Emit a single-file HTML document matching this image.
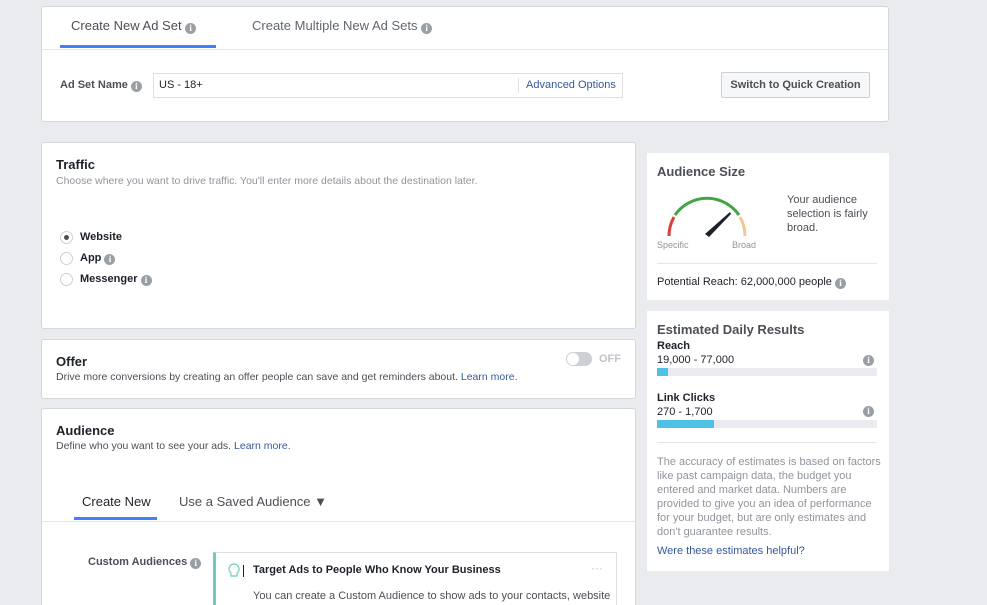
<!DOCTYPE html>
<html><head><meta charset="utf-8"><style>
*{box-sizing:border-box;margin:0;padding:0}
html{width:987px;height:605px;overflow:hidden}
body{width:987px;height:605px;background:#e9ebee;font-family:"Liberation Sans",Arial,sans-serif;color:#1d2129;position:relative;overflow:hidden;font-size:12px}
.a{position:absolute;white-space:nowrap}
.w{white-space:normal}
.card{position:absolute;background:#fff;border:1px solid #d3d6db;border-radius:3px;overflow:hidden}
.i{display:inline-block;width:11px;height:11px;border-radius:50%;background:#9a9fa6;color:#fff;font-size:9px;line-height:11px;text-align:center;font-weight:bold;vertical-align:-1px;font-family:"Liberation Serif",serif}
.radio{position:absolute;width:13px;height:13px;border:1px solid #ccd0d5;border-radius:50%}
.g{color:#90949c}
.lnk{color:#365899}
.bar{position:absolute;height:8px;background:#e9ebee;left:10px;width:220px}
.bar div{height:8px;background:#4ec1e6}
</style></head><body>

<div class="card" style="left:41px;top:6px;width:848px;height:116px">
 <div class="a" style="left:29px;top:11px;font-size:13px;color:#4b4f56">Create New Ad Set <span class="i">i</span></div>
 <div class="a" style="left:18px;top:38px;width:156px;height:3px;background:#4080ff"></div>
 <div class="a" style="left:210px;top:11px;font-size:13px;color:#606770">Create Multiple New Ad Sets <span class="i">i</span></div>
 <div class="a" style="left:0;top:42px;width:846px;height:1px;background:#e5e5e5"></div>
 <div class="a" style="left:18px;top:72px;font-size:11px;font-weight:bold;color:#4b4f56">Ad Set Name <span class="i">i</span></div>
 <div class="a" style="left:111px;top:66px;width:470px;height:25px;border:1px solid #dddfe2;font-size:11px"><span class="a" style="left:5px;top:5px">US - 18+</span><span class="a" style="left:364px;top:4px;height:15px;border-left:1px solid #dddfe2"></span><span class="a lnk" style="left:372px;top:5px">Advanced Options</span></div>
 <div class="a" style="left:679px;top:65px;width:149px;height:26px;border:1px solid #ccd0d5;background:#f6f7f9;border-radius:2px;font-weight:bold;color:#4b4f56;font-size:11px;text-align:center;line-height:24px">Switch to Quick Creation</div>
</div>

<div class="card" style="left:41px;top:142px;width:595px;height:187px">
 <div class="a" style="left:14px;top:14px;font-size:13px;font-weight:bold;color:#1d2129">Traffic</div>
 <div class="a g" style="left:14px;top:32px;font-size:10.5px">Choose where you want to drive traffic. You'll enter more details about the destination later.</div>
 <div class="radio" style="left:18px;top:88px"><div class="a" style="left:3px;top:3px;width:5px;height:5px;border-radius:50%;background:#4b4f56"></div></div>
 <div class="a" style="left:38px;top:88px;font-size:11px;font-weight:bold">Website</div>
 <div class="radio" style="left:18px;top:109px"></div>
 <div class="a" style="left:38px;top:109px;font-size:11px;font-weight:bold">App <span class="i">i</span></div>
 <div class="radio" style="left:18px;top:130px"></div>
 <div class="a" style="left:38px;top:130px;font-size:11px;font-weight:bold">Messenger <span class="i">i</span></div>
</div>

<div class="card" style="left:41px;top:339px;width:595px;height:60px">
 <div class="a" style="left:14px;top:14px;font-size:13px;font-weight:bold">Offer</div>
 <div class="a" style="left:14px;top:31px;font-size:10.5px;color:#4b4f56">Drive more conversions by creating an offer people can save and get reminders about. <span class="lnk">Learn more.</span></div>
 <div class="a" style="left:524px;top:12px;width:26px;height:14px;border-radius:7px;background:#ccd0d5"><div class="a" style="left:1px;top:1px;width:12px;height:12px;border-radius:50%;background:#fff"></div></div>
 <div class="a" style="left:557px;top:13px;font-size:11px;font-weight:bold;color:#bec3c9">OFF</div>
</div>

<div class="card" style="left:41px;top:408px;width:595px;height:210px">
 <div class="a" style="left:14px;top:14px;font-size:13px;font-weight:bold">Audience</div>
 <div class="a" style="left:14px;top:31px;font-size:10.5px;color:#4b4f56">Define who you want to see your ads. <span class="lnk">Learn more.</span></div>
 <div class="a" style="left:40px;top:85px;font-size:13px;color:#1d2129">Create New</div>
 <div class="a" style="left:32px;top:108px;width:83px;height:3px;background:#4080ff"></div>
 <div class="a" style="left:137px;top:85px;font-size:13px;color:#4b4f56">Use a Saved Audience &#9660;</div>
 <div class="a" style="left:0;top:112px;width:593px;height:1px;background:#e5e5e5"></div>
 <div class="a" style="left:46px;top:147px;font-size:11px;font-weight:bold;color:#4b4f56">Custom Audiences <span class="i">i</span></div>
 <div class="a" style="left:171px;top:143px;width:404px;height:80px;border:1px solid #dddfe2;border-left:3px solid #6bcebb">
  <svg class="a" style="left:12px;top:10px" width="12" height="16" viewBox="0 0 12 16"><path d="M6 1a5 5 0 0 0-3 9v3h6v-3a5 5 0 0 0-3-9z" fill="none" stroke="#6bcebb" stroke-width="1.2"/></svg>
  <div class="a" style="left:27px;top:12px;width:1px;height:12px;background:#1d2129"></div>
  <div class="a" style="left:37px;top:11px;font-size:11px;font-weight:bold">Target Ads to People Who Know Your Business</div>
  <div class="a" style="left:375px;top:8px;color:#bec3c9">···</div>
  <div class="a" style="left:37px;top:37px;font-size:11px;color:#4b4f56">You can create a Custom Audience to show ads to your contacts, website</div>
 </div>
</div>

<div class="card" style="left:647px;top:153px;width:242px;height:147px;border:none;border-radius:0">
 <div class="a" style="left:10px;top:11px;font-size:13px;font-weight:bold;color:#4b4f56">Audience Size</div>
 <svg class="a" style="left:18px;top:38px" width="84" height="50" viewBox="0 0 84 50">
  <path d="M4 45 A39 39 0 0 1 9 26" fill="none" stroke="#d6423a" stroke-width="3"/>
  <path d="M10 24 A39 39 0 0 1 74 24" fill="none" stroke="#42a443" stroke-width="3"/>
  <path d="M75 26 A39 39 0 0 1 80 45" fill="none" stroke="#f7c594" stroke-width="3"/>
  <path d="M65 21 L66 23 L44 46 L40 43 Z" fill="#1d2129"/>
 </svg>
 <div class="a g" style="left:10px;top:87px;font-size:9px">Specific</div>
 <div class="a g" style="left:85px;top:87px;font-size:9px">Broad</div>
 <div class="a w" style="left:140px;top:40px;font-size:11px;line-height:14px;color:#4b4f56;width:95px">Your audience selection is fairly broad.</div>
 <div class="a" style="left:10px;top:110px;width:220px;height:1px;background:#e5e5e5"></div>
 <div class="a" style="left:10px;top:123px;font-size:11px;color:#1d2129">Potential Reach: 62,000,000 people <span class="i">i</span></div>
</div>

<div class="card" style="left:647px;top:311px;width:242px;height:260px;border:none;border-radius:0">
 <div class="a" style="left:10px;top:11px;font-size:13px;font-weight:bold;color:#4b4f56">Estimated Daily Results</div>
 <div class="a" style="left:10px;top:29px;font-size:11px;font-weight:bold">Reach</div>
 <div class="a" style="left:10px;top:43px;font-size:11px">19,000 - 77,000</div>
 <span class="i a" style="left:216px;top:44px">i</span>
 <div class="bar" style="top:57px"><div style="width:11px"></div></div>
 <div class="a" style="left:10px;top:81px;font-size:11px;font-weight:bold">Link Clicks</div>
 <div class="a" style="left:10px;top:95px;font-size:11px">270 - 1,700</div>
 <span class="i a" style="left:216px;top:95px">i</span>
 <div class="bar" style="top:109px"><div style="width:57px"></div></div>
 <div class="a" style="left:10px;top:131px;width:220px;height:1px;background:#e5e5e5"></div>
 <div class="a g w" style="left:10px;top:144px;font-size:11px;line-height:14px;width:224px">The accuracy of estimates is based on factors like past campaign data, the budget you entered and market data. Numbers are provided to give you an idea of performance for your budget, but are only estimates and don't guarantee results.</div>
 <div class="a lnk" style="left:10px;top:234px;font-size:11px">Were these estimates helpful?</div>
</div>
</body></html>
